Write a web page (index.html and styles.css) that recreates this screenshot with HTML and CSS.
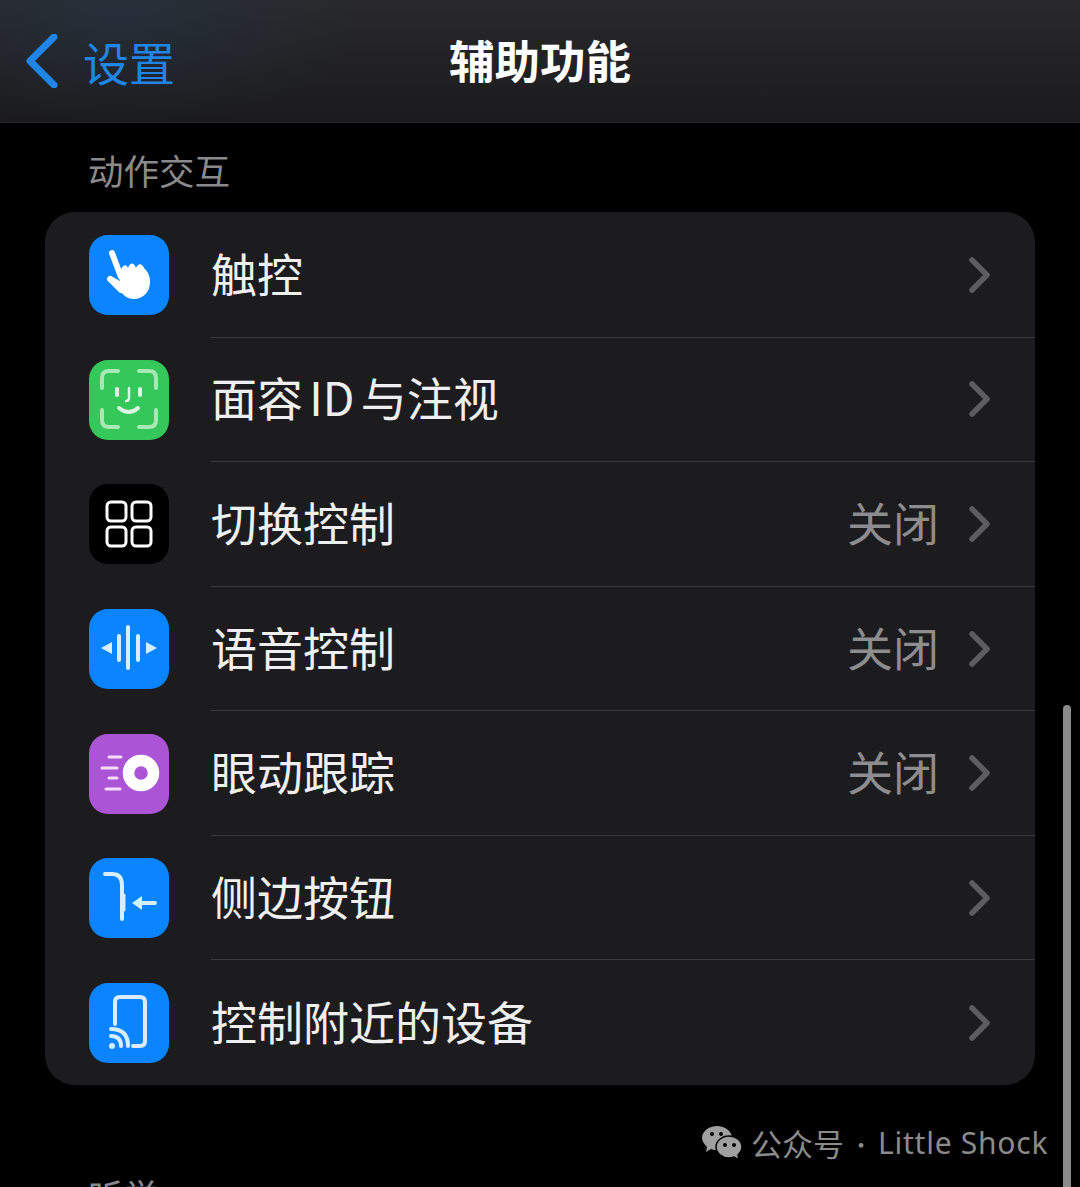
FILE: index.html
```html
<!DOCTYPE html>
<html lang="zh-CN">
<head>
  <meta charset="UTF-8" />
  <meta name="viewport" content="width=device-width, initial-scale=1.0"/>
  <title>辅助功能</title>
  <link rel="stylesheet" href="styles.css">
</head>
<body>

  <div class="nav">
    <div class="nav-back">
      <svg class="back-arrow" width="34" height="54" viewBox="0 0 34 54"><path d="M29 3 L5 27 L29 51"/></svg>
      <span>设置</span>
    </div>
    <div class="nav-title">辅助功能</div>
    <div></div>
  </div>

  <div class="section-title">动作交互</div>

  <div class="card">
    <div class="row">
      <svg class="icon icon-blue" viewBox="0 0 80 80">
        <path class="fill-white" d="M31 37 C33 30 37 28 39 33 C41 27 45 27 47 33 C49 28 53 28 55 33 C59 37 61 41 61 47 C61 57 54 64 45 64 C39 64 35 61 31 56 L20 46 L22 41 L31 46 Z"/>
        <path class="line-white thick" d="M23 18 L32 42"/>
        <path class="line-white thick" d="M21 44 L32 55"/>
      </svg>
      <div class="row-body">
        <span class="row-label">触控</span>
        <svg class="chevron" width="24" height="38" viewBox="0 0 24 38"><path d="M4 4 L19 19 L4 34"/></svg>
      </div>
    </div>

    <div class="row">
      <svg class="icon icon-green" viewBox="0 0 80 80">
        <path class="line-mint" d="M13 28 V18 Q13 11 20 11 H29"/>
        <path class="line-mint" d="M50 11 H60 Q67 11 67 18 V28"/>
        <path class="line-mint" d="M13 50 V60 Q13 67 20 67 H29"/>
        <path class="line-mint" d="M50 67 H60 Q67 67 67 60 V50"/>
        <path class="line-mint bright" d="M28 29 V35"/>
        <path class="line-mint bright" d="M51 29 V35"/>
        <path class="line-mint bright thin" d="M40 28 V38 Q40 41 37 41"/>
        <path class="line-mint bright" d="M30 48 Q40 56 49 48"/>
      </svg>
      <div class="row-body">
        <span class="row-label">面容 ID 与注视</span>
        <svg class="chevron" width="24" height="38" viewBox="0 0 24 38"><path d="M4 4 L19 19 L4 34"/></svg>
      </div>
    </div>

    <div class="row">
      <svg class="icon icon-black" viewBox="0 0 80 80">
        <rect class="line-white" x="18" y="18" width="19" height="19" rx="4"/>
        <rect class="line-white" x="43" y="18" width="19" height="19" rx="4"/>
        <rect class="line-white" x="18" y="43" width="19" height="19" rx="4"/>
        <rect class="line-white" x="43" y="43" width="19" height="19" rx="4"/>
      </svg>
      <div class="row-body">
        <span class="row-label">切换控制</span>
        <span class="row-value">关闭</span>
        <svg class="chevron" width="24" height="38" viewBox="0 0 24 38"><path d="M4 4 L19 19 L4 34"/></svg>
      </div>
    </div>

    <div class="row">
      <svg class="icon icon-blue" viewBox="0 0 80 80">
        <path class="fill-pale" d="M12 39 L23 33 V45 Z"/>
        <path class="fill-pale" d="M68 39 L57 33 V45 Z"/>
        <path class="line-pale" d="M30 27 V51"/>
        <path class="line-pale" d="M39 18 V59"/>
        <path class="line-pale" d="M49 27 V51"/>
      </svg>
      <div class="row-body">
        <span class="row-label">语音控制</span>
        <span class="row-value">关闭</span>
        <svg class="chevron" width="24" height="38" viewBox="0 0 24 38"><path d="M4 4 L19 19 L4 34"/></svg>
      </div>
    </div>

    <div class="row">
      <svg class="icon icon-purple" viewBox="0 0 80 80">
        <path class="line-pink" d="M20 23 H32"/>
        <path class="line-pink" d="M13 34 H28"/>
        <path class="line-pink" d="M20 44 H28"/>
        <path class="line-pink" d="M17 55 H31"/>
        <circle class="eye-ring" cx="52" cy="39" r="12.5"/>
      </svg>
      <div class="row-body">
        <span class="row-label">眼动跟踪</span>
        <span class="row-value">关闭</span>
        <svg class="chevron" width="24" height="38" viewBox="0 0 24 38"><path d="M4 4 L19 19 L4 34"/></svg>
      </div>
    </div>

    <div class="row">
      <svg class="icon icon-blue" viewBox="0 0 80 80">
        <path class="line-pale" d="M16 16 H23 Q33 16 33 27 V61"/>
        <path class="line-pale thick" d="M35 37 V52"/>
        <path class="line-pale" d="M50 45 H66"/>
        <path class="fill-pale" d="M43 45 L53 38 V52 Z"/>
      </svg>
      <div class="row-body">
        <span class="row-label">侧边按钮</span>
        <svg class="chevron" width="24" height="38" viewBox="0 0 24 38"><path d="M4 4 L19 19 L4 34"/></svg>
      </div>
    </div>

    <div class="row">
      <svg class="icon icon-blue" viewBox="0 0 80 80">
        <path class="line-pale" d="M26 41 V19 Q26 14 31 14 H51 Q56 14 56 19 V58 Q56 63 51 63 H44"/>
        <circle class="fill-pale" cx="23" cy="63" r="3"/>
        <path class="line-pale" d="M22 53 Q32 53 32 63"/>
        <path class="line-pale" d="M22 46 Q39 46 39 63"/>
      </svg>
      <div class="row-body">
        <span class="row-label">控制附近的设备</span>
        <svg class="chevron" width="24" height="38" viewBox="0 0 24 38"><path d="M4 4 L19 19 L4 34"/></svg>
      </div>
    </div>
  </div>

  <div class="section-title next">听觉</div>

  <!-- watermark sits on top of the page -->
  <div class="watermark">
    <svg class="wechat" width="42" height="36" viewBox="0 0 42 36">
      <path class="bubble" d="M16 1 C24 1 31 6 31 13 C31 20 24 25 16 25 C14 25 12 25 10 24 L5 27 L6 22 C3 19 1 16 1 13 C1 6 8 1 16 1 Z"/>
      <path class="bubble back" d="M28 11 C35 11 41 16 41 22 C41 25 39 28 37 30 L38 35 L33 32 C31 33 30 33 28 33 C21 33 15 28 15 22 C15 16 21 11 28 11 Z"/>
      <circle class="eye" cx="11" cy="9" r="2"/>
      <circle class="eye" cx="20" cy="9" r="2"/>
      <circle class="eye" cx="24" cy="20" r="2"/>
      <circle class="eye" cx="33" cy="20" r="2"/>
    </svg>
    <span class="wm-cn">公众号</span>
    <span class="wm-dot">·</span>
    <span class="wm-name">Little Shock</span>
  </div>

  <div class="scrollbar"></div>

</body>
</html>
```

FILE: styles.css
```css
* { margin: 0; padding: 0; box-sizing: border-box; }
body {
  position: relative;
  width: 1080px;
  height: 1187px;
  overflow: hidden;
  background: #000;
  color: #efeff0;
  font-family: "Noto Sans CJK SC", "Noto Sans", sans-serif;
}
.nav {
  height: 123px;
  display: grid;
  grid-template-columns: 1fr auto 1fr;
  align-items: center;
  background:
    radial-gradient(ellipse 240px 110px at 120px 15px, rgba(34, 62, 92, 0.32), rgba(34, 62, 92, 0) 100%),
    linear-gradient(#29292b, #1b1b1d);
  border-bottom: 1px solid #262628;
}
.nav-back {
  display: flex;
  align-items: center;
  gap: 24px;
  padding-left: 25px;
  color: #1f85e6;
  font-size: 46px;
  line-height: 1;
}
.back-arrow path {
  fill: none;
  stroke: #1f85e6;
  stroke-width: 7;
  stroke-linecap: round;
  stroke-linejoin: round;
}
.nav-title {
  font-size: 45.5px;
  font-weight: 700;
  color: #fff;
  line-height: 1;
  padding-bottom: 2px;
}
.section-title {
  padding: 25px 0 20px 88px;
  font-size: 35.5px;
  line-height: 44px;
  color: #8a8a8d;
}
.section-title.next {
  padding-top: 88px;
}
.card {
  margin-left: 45px;
  width: 990px;
  height: 873px;
  padding-top: 1px;
  border-radius: 30px;
  background: #1c1c1e;
  display: flex;
  flex-direction: column;
  overflow: hidden;
}
.row {
  flex: 1;
  display: flex;
  align-items: center;
  padding-left: 44px;
  gap: 42px;
}
.icon {
  width: 80px;
  height: 80px;
  border-radius: 19px;
  flex-shrink: 0;
}
.icon-blue { background: #0a84ff; }
.icon-green { background: #34c759; }
.icon-black { background: #000; }
.icon-purple { background: #ab55d6; }
.row-body {
  flex: 1;
  height: 100%;
  display: flex;
  align-items: center;
  padding-right: 43px;
  border-bottom: 1px solid #38383a;
}
.row:last-child .row-body { border-bottom: none; }
.row-label {
  flex: 1;
  font-size: 46px;
  line-height: 1;
  padding-bottom: 6px;
  word-spacing: -4px;
}
.row-value {
  font-size: 46px;
  line-height: 1;
  padding-bottom: 6px;
  color: #8d8d90;
  margin-right: 29px;
}
.chevron path {
  fill: none;
  stroke: #5d5d60;
  stroke-width: 5.5;
  stroke-linecap: round;
  stroke-linejoin: round;
}

/* icon strokes */
.line-white, .line-pale, .line-mint, .line-pink {
  fill: none;
  stroke-width: 4;
  stroke-linecap: round;
  stroke-linejoin: round;
}
.line-white { stroke: #fff; }
.icon-black .line-white { stroke-width: 3; }
.line-pale { stroke: #d8edff; }
.line-mint { stroke: #a8e8b5; stroke-width: 4; }
.line-mint.bright { stroke: #dcf6e2; }
.line-pink { stroke: #f8dcfb; stroke-width: 3; }
.line-white.thick { stroke-width: 6; }
.line-pale.thick { stroke-width: 3; }
.line-mint.thin { stroke-width: 2.5; }
.fill-white { fill: #fff; }
.fill-pale { fill: #d8edff; }
.eye-ring {
  fill: none;
  stroke: #fff;
  stroke-width: 11.5;
}

.watermark {
  position: absolute;
  left: 701px;
  top: 1123px;
  display: flex;
  align-items: center;
  color: #8b8b8b;
  font-size: 31px;
  line-height: 40px;
}
.wechat { margin-right: 8px; }
.bubble { fill: #a0a0a0; }
.bubble.back { stroke: #000; stroke-width: 1.5; }
.eye { fill: #000; }
.wm-dot { margin: 0 6px; font-size: 22px; }
.wm-name {
  font-family: "Noto Sans", sans-serif;
  font-size: 30px;
  letter-spacing: 0.75px;
}
.scrollbar {
  position: absolute;
  left: 1063px;
  top: 705px;
  width: 8px;
  height: 490px;
  border-radius: 4px;
  background: #8a8a8a;
}
```
